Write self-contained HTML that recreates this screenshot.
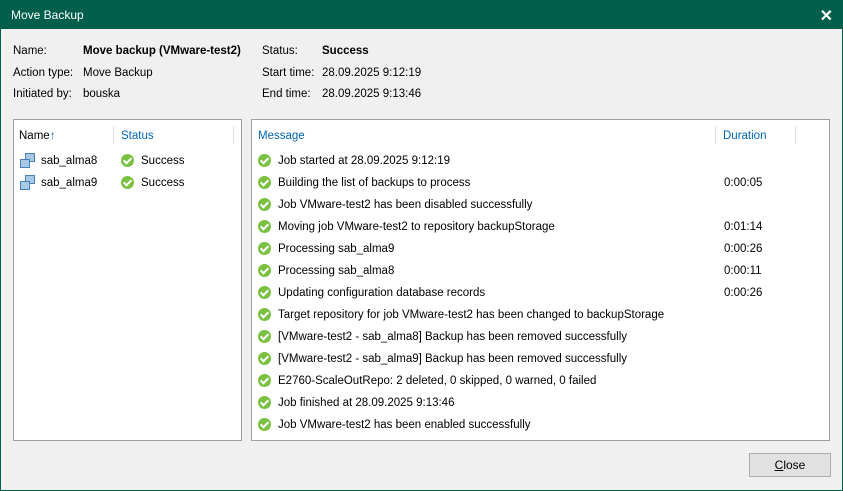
<!DOCTYPE html>
<html><head><style>
*{margin:0;padding:0;box-sizing:border-box}
body{width:843px;height:491px;background:#005f4b;font-family:"Liberation Sans",sans-serif;font-size:11.5px;color:#000;position:relative;overflow:hidden}
.win{position:absolute;left:1px;top:29px;width:841px;height:461px;background:#f0f0f0}
.t{position:absolute;white-space:nowrap;line-height:14px}
.title{position:absolute;left:11px;top:8px;color:#fff;font-size:12px}
.x{position:absolute;right:10px;top:6px;color:#fff;font-size:16px;font-weight:bold}
.panel{position:absolute;background:#fff;border:1px solid #a0a0a0}
.hd{color:#0066b4}
.sep{position:absolute;width:1px;height:18px;background:#e0e0e0}
.ck{position:absolute;width:13px;height:13px;border-radius:50%;background:#7ac142}
.ck:after{content:"";position:absolute;left:4px;top:2px;width:3px;height:6px;border:solid #fff;border-width:0 2px 2px 0;transform:rotate(45deg)}
.vm{position:absolute;width:16px;height:15px}
.btn{position:absolute;left:749px;top:453px;width:82px;height:24px;background:#e1e1e1;border:1px solid #adadad;text-align:center;line-height:22px;font-size:12px}
</style></head><body>
<div class="title">Move Backup</div>
<div class="x">✕</div>
<div class="win"></div>
<div class="t" style="left:13px;top:44px">Name:</div>
<div class="t" style="left:83px;top:44px;font-weight:bold">Move backup (VMware-test2)</div>
<div class="t" style="left:13px;top:66px">Action type:</div>
<div class="t" style="left:83px;top:66px">Move Backup</div>
<div class="t" style="left:13px;top:87px">Initiated by:</div>
<div class="t" style="left:83px;top:87px">bouska</div>
<div class="t" style="left:262px;top:44px">Status:</div>
<div class="t" style="left:322px;top:44px;font-weight:bold">Success</div>
<div class="t" style="left:262px;top:66px">Start time:</div>
<div class="t" style="left:322px;top:66px">28.09.2025 9:12:19</div>
<div class="t" style="left:262px;top:87px">End time:</div>
<div class="t" style="left:322px;top:87px">28.09.2025 9:13:46</div>

<div class="panel" style="left:13px;top:119px;width:229px;height:322px"></div>
<div class="t" style="left:19px;top:129px">Name<span class="hd">↑</span></div>
<div class="sep" style="left:113px;top:126px"></div>
<div class="t hd" style="left:121px;top:129px">Status</div>
<div class="sep" style="left:233px;top:126px"></div>

<svg class="vm" style="left:20px;top:153px" viewBox="0 0 16 15"><rect x="5.5" y="0.5" width="9" height="8" fill="#a8c8e8" stroke="#4a7fb8"/><rect x="0.5" y="6.5" width="9" height="8" fill="#a8c8e8" stroke="#4a7fb8"/></svg>
<div class="t" style="left:41px;top:154px">sab_alma8</div>
<div class="ck" style="left:121px;top:154px"></div>
<div class="t" style="left:141px;top:154px">Success</div>
<svg class="vm" style="left:20px;top:175px" viewBox="0 0 16 15"><rect x="5.5" y="0.5" width="9" height="8" fill="#a8c8e8" stroke="#4a7fb8"/><rect x="0.5" y="6.5" width="9" height="8" fill="#a8c8e8" stroke="#4a7fb8"/></svg>
<div class="t" style="left:41px;top:176px">sab_alma9</div>
<div class="ck" style="left:121px;top:176px"></div>
<div class="t" style="left:141px;top:176px">Success</div>

<div class="panel" style="left:251px;top:119px;width:579px;height:322px"></div>
<div class="t hd" style="left:258px;top:129px">Message</div>
<div class="sep" style="left:715px;top:126px"></div>
<div class="t hd" style="left:723px;top:129px">Duration</div>
<div class="sep" style="left:795px;top:126px"></div>

<div class="ck" style="left:258px;top:154px"></div><div class="t" style="left:278px;top:154px">Job started at 28.09.2025 9:12:19</div>
<div class="ck" style="left:258px;top:176px"></div><div class="t" style="left:278px;top:176px">Building the list of backups to process</div><div class="t" style="left:724px;top:176px">0:00:05</div>
<div class="ck" style="left:258px;top:198px"></div><div class="t" style="left:278px;top:198px">Job VMware-test2 has been disabled successfully</div>
<div class="ck" style="left:258px;top:220px"></div><div class="t" style="left:278px;top:220px">Moving job VMware-test2 to repository backupStorage</div><div class="t" style="left:724px;top:220px">0:01:14</div>
<div class="ck" style="left:258px;top:242px"></div><div class="t" style="left:278px;top:242px">Processing sab_alma9</div><div class="t" style="left:724px;top:242px">0:00:26</div>
<div class="ck" style="left:258px;top:264px"></div><div class="t" style="left:278px;top:264px">Processing sab_alma8</div><div class="t" style="left:724px;top:264px">0:00:11</div>
<div class="ck" style="left:258px;top:286px"></div><div class="t" style="left:278px;top:286px">Updating configuration database records</div><div class="t" style="left:724px;top:286px">0:00:26</div>
<div class="ck" style="left:258px;top:308px"></div><div class="t" style="left:278px;top:308px">Target repository for job VMware-test2 has been changed to backupStorage</div>
<div class="ck" style="left:258px;top:330px"></div><div class="t" style="left:278px;top:330px">[VMware-test2 - sab_alma8] Backup has been removed successfully</div>
<div class="ck" style="left:258px;top:352px"></div><div class="t" style="left:278px;top:352px">[VMware-test2 - sab_alma9] Backup has been removed successfully</div>
<div class="ck" style="left:258px;top:374px"></div><div class="t" style="left:278px;top:374px">E2760-ScaleOutRepo: 2 deleted, 0 skipped, 0 warned, 0 failed</div>
<div class="ck" style="left:258px;top:396px"></div><div class="t" style="left:278px;top:396px">Job finished at 28.09.2025 9:13:46</div>
<div class="ck" style="left:258px;top:418px"></div><div class="t" style="left:278px;top:418px">Job VMware-test2 has been enabled successfully</div>

<div class="btn"><u>C</u>lose</div>
</body></html>
